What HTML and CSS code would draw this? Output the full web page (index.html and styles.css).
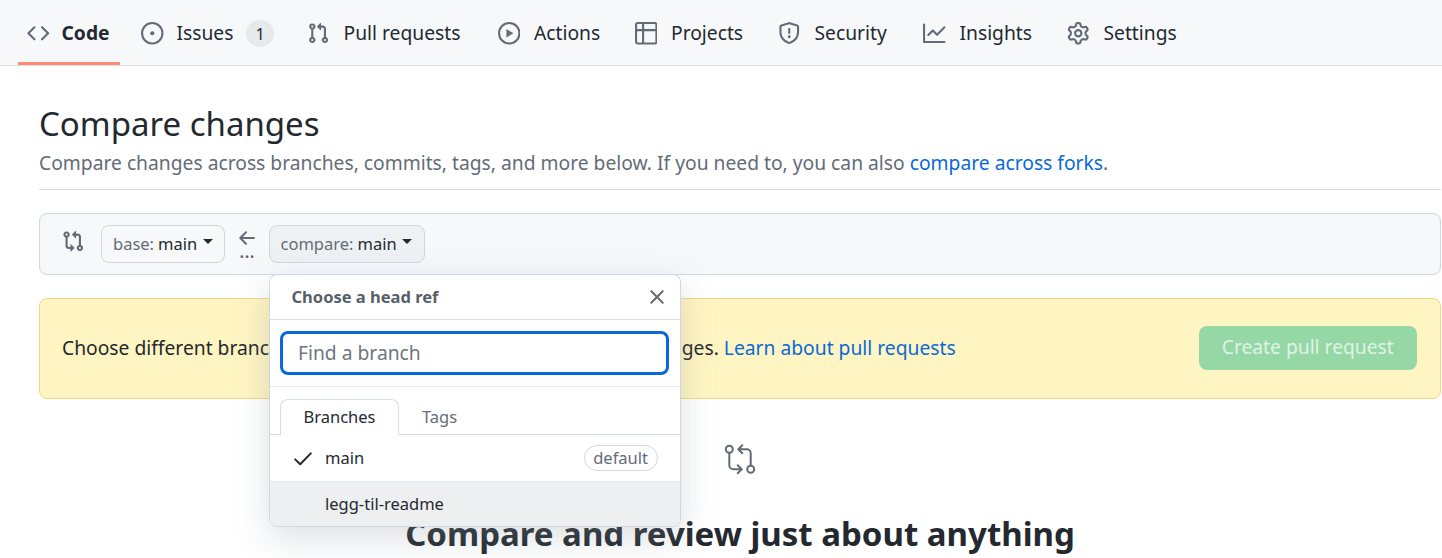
FILE: index.html
```html
<!DOCTYPE html>
<html lang="en">
<head>
<meta charset="utf-8">
<title>Compare changes</title>
<link rel="stylesheet" href="styles.css">
</head>
<body>
<nav class="nav">
  <a class="tab active"><svg class="icon" viewBox="0 0 16 16"><path d="M4.72 3.22a.75.75 0 011.06 1.06L2.06 8l3.72 3.72a.75.75 0 11-1.06 1.06L.47 8.53a.75.75 0 010-1.06l4.25-4.25zm6.56 0a.75.75 0 10-1.06 1.06L13.94 8l-3.72 3.72a.75.75 0 101.06 1.06l4.25-4.25a.75.75 0 000-1.06l-4.25-4.25z"/></svg><span>Code</span></a>
  <a class="tab"><svg class="icon" viewBox="0 0 16 16"><path d="M8 9.5a1.5 1.5 0 100-3 1.5 1.5 0 000 3z"/><path fill-rule="evenodd" d="M8 0a8 8 0 100 16A8 8 0 008 0zM1.5 8a6.5 6.5 0 1113 0 6.5 6.5 0 01-13 0z"/></svg><span>Issues</span><span class="counter">1</span></a>
  <a class="tab"><svg class="icon" viewBox="0 0 16 16"><path fill-rule="evenodd" d="M7.177 3.073L9.573.677A.25.25 0 0110 .854v4.792a.25.25 0 01-.427.177L7.177 3.427a.25.25 0 010-.354zM3.75 2.5a.75.75 0 100 1.5.75.75 0 000-1.5zm-2.25.75a2.25 2.25 0 113 2.122v5.256a2.251 2.251 0 11-1.5 0V5.372A2.25 2.25 0 011.5 3.25zM11 2.5h-1V4h1a1 1 0 011 1v5.628a2.251 2.251 0 101.5 0V5A2.5 2.5 0 0011 2.5zm1 10.25a.75.75 0 111.5 0 .75.75 0 01-1.5 0zM3.75 12a.75.75 0 100 1.5.75.75 0 000-1.5z"/></svg><span>Pull requests</span></a>
  <a class="tab"><svg class="icon" viewBox="0 0 16 16"><path fill-rule="evenodd" d="M1.5 8a6.5 6.5 0 1113 0 6.5 6.5 0 01-13 0zM8 0a8 8 0 100 16A8 8 0 008 0zM6.379 5.227A.25.25 0 006 5.442v5.117a.25.25 0 00.379.214l4.264-2.559a.25.25 0 000-.428L6.379 5.227z"/></svg><span>Actions</span></a>
  <a class="tab"><svg class="icon" viewBox="0 0 16 16"><path fill-rule="evenodd" d="M0 1.75C0 .784.784 0 1.75 0h12.5C15.216 0 16 .784 16 1.75v12.5A1.75 1.75 0 0114.25 16H1.75A1.75 1.75 0 010 14.25V1.75zM1.5 6.5v7.75c0 .138.112.25.25.25H5v-8H1.5zM5 5H1.5V1.75a.25.25 0 01.25-.25H5V5zm1.5 1.5v8h7.75a.25.25 0 00.25-.25V6.5h-8zm8-1.5h-8V1.5h7.75a.25.25 0 01.25.25V5z"/></svg><span>Projects</span></a>
  <a class="tab"><svg class="icon" viewBox="0 0 16 16"><path fill-rule="evenodd" d="M7.467.133a1.75 1.75 0 011.066 0l5.25 1.68A1.75 1.75 0 0115 3.48V7c0 1.566-.32 3.182-1.303 4.682-.983 1.498-2.585 2.813-5.032 3.855a1.7 1.7 0 01-1.33 0c-2.447-1.042-4.049-2.357-5.032-3.855C1.32 10.182 1 8.566 1 7V3.48a1.75 1.75 0 011.217-1.667l5.25-1.68zm.61 1.429a.25.25 0 00-.153 0l-5.25 1.68a.25.25 0 00-.174.238V7c0 1.358.275 2.666 1.057 3.86.784 1.194 2.121 2.34 4.366 3.297a.2.2 0 00.154 0c2.245-.956 3.582-2.104 4.366-3.298C13.225 9.666 13.5 8.36 13.5 7V3.48a.25.25 0 00-.174-.237l-5.25-1.68zM9 10.5a1 1 0 11-2 0 1 1 0 012 0zm-.25-5.75a.75.75 0 10-1.5 0v3a.75.75 0 001.5 0v-3z"/></svg><span>Security</span></a>
  <a class="tab"><svg class="icon" viewBox="0 0 16 16"><path fill-rule="evenodd" d="M1.5 1.75a.75.75 0 00-1.5 0v12.5c0 .414.336.75.75.75h14.5a.75.75 0 000-1.5H1.5V1.75zm14.28 2.53a.75.75 0 00-1.06-1.06L10 7.94 7.53 5.47a.75.75 0 00-1.06 0L3.22 8.72a.75.75 0 001.06 1.06L7 7.06l2.47 2.47a.75.75 0 001.06 0l5.25-5.25z"/></svg><span>Insights</span></a>
  <a class="tab"><svg class="icon" viewBox="0 0 16 16"><path fill-rule="evenodd" d="M8 0a8.2 8.2 0 0 1 .701.031C9.444.095 9.99.645 10.16 1.29l.288 1.107c.018.066.079.158.212.224.231.114.454.243.668.386.123.082.233.09.299.071l1.103-.303c.644-.176 1.392.021 1.82.63.27.385.506.792.704 1.218.315.675.111 1.422-.364 1.891l-.814.806c-.049.048-.098.147-.088.294.016.257.016.515 0 .772-.01.147.038.246.088.294l.814.806c.475.469.679 1.216.364 1.891a7.977 7.977 0 0 1-.704 1.217c-.428.61-1.176.807-1.82.63l-1.102-.302c-.067-.019-.177-.011-.3.071a5.909 5.909 0 0 1-.668.386c-.133.066-.194.158-.211.224l-.29 1.106c-.168.646-.715 1.196-1.458 1.26a8.006 8.006 0 0 1-1.402 0c-.743-.064-1.289-.614-1.458-1.26l-.289-1.106c-.018-.066-.079-.158-.212-.224a5.738 5.738 0 0 1-.668-.386c-.123-.082-.233-.09-.299-.071l-1.103.303c-.644.176-1.392-.021-1.82-.63a8.12 8.12 0 0 1-.704-1.218c-.315-.675-.111-1.422.363-1.891l.815-.806c.05-.048.098-.147.088-.294a6.214 6.214 0 0 1 0-.772c.01-.147-.038-.246-.088-.294l-.815-.806C.635 6.045.431 5.298.746 4.623a7.92 7.92 0 0 1 .704-1.217c.428-.61 1.176-.807 1.82-.63l1.102.302c.067.019.177.011.3-.071.214-.143.437-.272.668-.386.133-.066.194-.158.211-.224l.29-1.106C6.009.645 6.556.095 7.299.03 7.53.01 7.764 0 8 0Zm-.571 1.525c-.036.003-.108.036-.137.146l-.289 1.105c-.147.561-.549.967-.998 1.189-.173.086-.34.183-.5.29-.417.278-.97.423-1.529.27l-1.103-.303c-.109-.03-.175.016-.195.045-.22.312-.412.644-.573.99-.014.031-.021.11.059.19l.815.806c.411.406.562.957.53 1.456a4.709 4.709 0 0 0 0 .582c.032.499-.119 1.05-.53 1.456l-.815.806c-.081.08-.073.159-.059.19.162.346.353.677.573.989.02.03.085.076.195.046l1.102-.303c.56-.153 1.113-.008 1.53.27.161.107.328.204.501.29.447.222.85.629.997 1.189l.289 1.105c.029.109.101.143.137.146a6.6 6.6 0 0 0 1.142 0c.036-.003.108-.036.137-.146l.289-1.105c.147-.561.549-.967.998-1.189.173-.086.34-.183.5-.29.417-.278.97-.423 1.529-.27l1.103.303c.109.029.175-.016.195-.045.22-.313.411-.644.573-.99.014-.031.021-.11-.059-.19l-.815-.806c-.411-.406-.562-.957-.53-1.456a4.709 4.709 0 0 0 0-.582c-.032-.499.119-1.05.53-1.456l.815-.806c.081-.08.073-.159.059-.19a6.464 6.464 0 0 0-.573-.989c-.02-.03-.085-.076-.195-.046l-1.102.303c-.56.153-1.113.008-1.53-.27a4.44 4.44 0 0 0-.501-.29c-.447-.222-.85-.629-.997-1.189l-.289-1.105c-.029-.11-.101-.143-.137-.146a6.6 6.6 0 0 0-1.142 0ZM11 8a3 3 0 1 1-6 0 3 3 0 0 1 6 0ZM9.5 8a1.5 1.5 0 1 0-3.001.001A1.5 1.5 0 0 0 9.5 8Z"/></svg><span>Settings</span></a>
</nav>
<main class="page">
  <header class="heading">
    <h1>Compare changes</h1>
    <p>Compare changes across branches, commits, tags, and more below. If you need to, you can also <a class="link">compare across forks</a>.</p>
  </header>
  <section class="range">
    <svg class="icon compare" viewBox="0 0 16 16"><path fill-rule="evenodd" d="M9.573.677L7.177 3.073a.25.25 0 000 .354l2.396 2.396A.25.25 0 0010 5.646V4h1a1 1 0 011 1v5.628a2.251 2.251 0 101.5 0V5A2.5 2.5 0 0011 2.5h-1V.854a.25.25 0 00-.427-.177zM6 12v-1.646a.25.25 0 01.427-.177l2.396 2.396a.25.25 0 010 .354l-2.396 2.396A.25.25 0 016 15.146V13.5H5A2.5 2.5 0 012.5 11V5.372a2.25 2.25 0 111.5 0V11a1 1 0 001 1h1zm6.75 0a.75.75 0 100 1.5.75.75 0 000-1.5zM4 3.25a.75.75 0 11-1.5 0 .75.75 0 011.5 0z"/></svg>
    <button class="ref base"><span class="muted">base:</span> <span>main</span><i class="caret"></i></button>
    <div class="direction">
      <svg class="arrow" viewBox="0 0 16 14"><path d="M7 1.2 1.3 7 7 12.8M1.5 7H15"/></svg>
      <span class="dots">...</span>
    </div>
    <div class="picker">
      <button class="ref selected"><span class="muted">compare:</span> <span>main</span><i class="caret"></i></button>
      <div class="menu">
        <div class="menu-head"><span>Choose a head ref</span><svg class="close" viewBox="0 0 14 14"><path d="M1.3 1.3 12.7 12.7M12.7 1.3 1.3 12.7"/></svg></div>
        <div class="search"><input type="text" placeholder="Find a branch"></div>
        <div class="ref-tabs"><span class="ref-tab current">Branches</span><span class="ref-tab">Tags</span></div>
        <div class="item"><svg class="check" viewBox="0 0 18 14"><path d="M1.2 7.4 6.2 12.2 16.8 1.4"/></svg><span>main</span><span class="label">default</span></div>
        <div class="item hover"><span>legg-til-readme</span></div>
      </div>
    </div>
  </section>
  <section class="flash">
    <p>Choose different branches or forks above to discuss and review changes. <a class="link">Learn about pull requests</a></p>
    <button class="create" disabled>Create pull request</button>
  </section>
  <section class="blank">
    <svg class="blank-icon" viewBox="0 0 32 32"><circle cx="5.3" cy="6.3" r="3.5"/><circle cx="26.7" cy="26.3" r="3.5"/><path d="M5.3 10v12.3a4 4 0 0 0 4 4h8M13.7 22.3l4 4-4 4M26.7 22.6V10.3a4 4 0 0 0-4-4h-8M18.3 2.3l-4 4 4 4"/></svg>
    <h2>Compare and review just about anything</h2>
  </section>
</main>
</body>
</html>
```
FILE: styles.css
```css
* { box-sizing: border-box; }
body { margin: 0; height: 558px; overflow: hidden; background: #fff; color: #24292f; font-family: "Noto Sans", sans-serif; font-size: 19.25px; }
h1, h2, p { margin: 0; font-weight: 400; }
.nav { display: grid; grid-template-columns: 113.5px 166px 190.5px 137px 143.5px 145px 144px 130px; height: 66px; padding-left: 17.5px; background: #f6f8fa; border-bottom: 1px solid #d8dee4; }
.tab { display: flex; align-items: center; height: 65px; padding-left: 10px; white-space: nowrap; }
.tab > .icon { margin-right: 14px; }
.tab:nth-child(2) > .icon { margin-right: 13px; }
.tab.active { width: 102.5px; border-bottom: 3px solid #fd8c73; padding-top: 3px; padding-left: 9.5px; font-weight: 700; }
.tab.active > .icon { margin-right: 12px; }
.icon { width: 22.5px; height: 22.5px; flex: none; fill: #636c76; }
.tab .icon { position: relative; top: 1px; }
.counter { display: flex; align-items: center; justify-content: center; width: 27.5px; height: 27.5px; margin: 2px 0 0 13px; border-radius: 14px; background: #e7eaed; font-size: 16.5px; }
.page { padding: 41px 1px 0 39px; }
.heading { height: 83px; border-bottom: 1px solid #d8dee4; }
.heading h1 { font-size: 33px; line-height: 34px; }
.heading p { margin-top: 8px; font-size: 19.25px; line-height: 28px; color: #636c76; white-space: nowrap; }
.link { color: #0969da; }
.range { display: flex; align-items: flex-start; height: 62px; margin-top: 23px; padding: 11px 0 0 22px; background: #f6f8fa; border: 1.4px solid #d0d7de; border-radius: 8px; }
.compare { margin: 5px 16.5px 0 0; }
button { font-family: inherit; }
.ref { display: flex; align-items: center; height: 38px; padding: 0 11px 2px; border: 1.4px solid #d0d7de; border-radius: 8px; background: #f6f8fa; color: #24292f; font-size: 16.5px; white-space: pre; }
.ref.base { width: 124px; }
.ref.selected { width: 156px; padding-left: 10.5px; background: #eef1f4; }
.muted { color: #656d76; margin-right: 4px; }
.caret { margin: -3px 0 0 5.5px; border: 5px solid transparent; border-top-color: #24292f; border-bottom: 0; }
.direction { display: flex; flex-direction: column; align-items: center; width: 44px; padding-top: 6px; }
.arrow { width: 16px; height: 14px; }
.arrow path, .close path, .check path, .blank-icon { fill: none; stroke: #636c76; stroke-width: 2; stroke-linecap: round; stroke-linejoin: round; }
.dots { font-size: 19.25px; line-height: 20px; margin-top: -4px; color: #57606a; }
.picker { position: relative; }
.menu { position: absolute; z-index: 2; top: 49px; left: 0; width: 412px; height: 253px; overflow: hidden; background: #fff; border: 1px solid #d0d7de; border-radius: 8px; box-shadow: 0 11px 34px rgba(140,149,159,.3); font-size: 16.5px; }
.menu-head { display: flex; align-items: center; justify-content: space-between; height: 45px; padding: 0 16px 1px 21.5px; border-bottom: 1px solid #d8dee4; color: #57606a; font-weight: 700; font-size: 16.5px; }
.close { width: 14px; height: 14px; }
.search { height: 67px; padding: 11px 10px; border-bottom: 1px solid #e4e8ec; }
.search input { display: block; width: 389px; height: 44px; padding: 0 15px 1px; border: 3px solid #0969da; border-radius: 8px; outline: 0; font: 19.25px "Noto Sans", sans-serif; background: #fff; }
.search input::placeholder { color: #6e7781; opacity: 1; }
.ref-tabs { display: flex; height: 48px; padding: 12px 0 0 10px; border-bottom: 1px solid #d8dee4; }
.ref-tab { display: flex; align-items: center; justify-content: center; height: 36px; padding: 0 23px 1px; color: #656d76; }
.ref-tab.current { width: 119px; padding: 0 0 3px; border: 1px solid #d8dee4; border-bottom: 0; border-radius: 8px 8px 0 0; background: #fff; color: #24292f; }
.item { display: flex; align-items: center; height: 47px; padding: 0 22.5px 1px 24px; border-bottom: 1px solid #e4e8ec; }
.item.hover { height: 45px; padding-left: 55px; padding-bottom: 2px; border: 0; background: #eeeff1; }
.check { width: 18px; height: 14px; margin: 2px 13px 0 0; }
.check path { stroke: #24292f; }
.label { display: flex; align-items: center; height: 26px; margin-left: auto; padding: 0 8.5px; border: 1px solid #d0d7de; border-radius: 13px; color: #656d76; }
.flash { display: flex; align-items: center; justify-content: space-between; height: 101px; margin-top: 23px; padding: 0 23px 2px 22px; background: #fff5c2; border: 1.4px solid #eed888; border-radius: 8px; white-space: nowrap; }
.create { width: 218.5px; height: 44px; padding: 0 0 2px; border: 0; border-radius: 8px; background: #95d8a6; color: #dff3e4; font-size: 19.25px; }
.blank { display: flex; flex-direction: column; align-items: center; padding-top: 44px; }
.blank-icon { width: 32px; height: 32px; }
.blank h2 { margin-top: 34px; font-size: 33px; line-height: 50px; font-weight: 700; white-space: nowrap; }
```
